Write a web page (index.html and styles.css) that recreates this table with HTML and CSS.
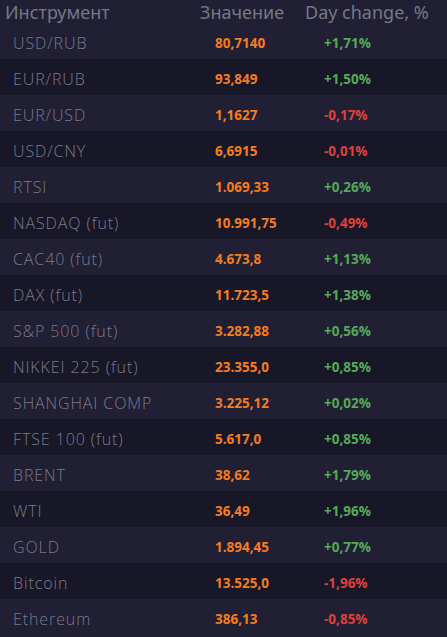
FILE: index.html
```html
<!DOCTYPE html>
<html lang="ru">
<head>
<meta charset="utf-8">
<link rel="stylesheet" href="styles.css">
</head>
<body>
<div class="table">
  <div class="head">
    <div class="h-name">Инструмент</div>
    <div class="h-val">Значение</div>
    <div class="h-chg">Day change, %</div>
  </div>
  <div class="row odd"><div class="name">USD/RUB</div><div class="val">80,7140</div><div class="chg up">+1,71%</div></div>
  <div class="row even"><div class="name">EUR/RUB</div><div class="val">93,849</div><div class="chg up">+1,50%</div></div>
  <div class="row odd"><div class="name">EUR/USD</div><div class="val">1,1627</div><div class="chg down">-0,17%</div></div>
  <div class="row even"><div class="name">USD/CNY</div><div class="val">6,6915</div><div class="chg down">-0,01%</div></div>
  <div class="row odd"><div class="name">RTSI</div><div class="val">1.069,33</div><div class="chg up">+0,26%</div></div>
  <div class="row even"><div class="name">NASDAQ (fut)</div><div class="val">10.991,75</div><div class="chg down">-0,49%</div></div>
  <div class="row odd"><div class="name">CAC40 (fut)</div><div class="val">4.673,8</div><div class="chg up">+1,13%</div></div>
  <div class="row even"><div class="name">DAX (fut)</div><div class="val">11.723,5</div><div class="chg up">+1,38%</div></div>
  <div class="row odd"><div class="name">S&amp;P 500 (fut)</div><div class="val">3.282,88</div><div class="chg up">+0,56%</div></div>
  <div class="row even"><div class="name">NIKKEI 225 (fut)</div><div class="val">23.355,0</div><div class="chg up">+0,85%</div></div>
  <div class="row odd"><div class="name">SHANGHAI COMP</div><div class="val">3.225,12</div><div class="chg up">+0,02%</div></div>
  <div class="row even"><div class="name">FTSE 100 (fut)</div><div class="val">5.617,0</div><div class="chg up">+0,85%</div></div>
  <div class="row odd"><div class="name">BRENT</div><div class="val">38,62</div><div class="chg up">+1,79%</div></div>
  <div class="row even"><div class="name">WTI</div><div class="val">36,49</div><div class="chg up">+1,96%</div></div>
  <div class="row odd"><div class="name">GOLD</div><div class="val">1.894,45</div><div class="chg up">+0,77%</div></div>
  <div class="row even"><div class="name">Bitcoin</div><div class="val">13.525,0</div><div class="chg down">-1,96%</div></div>
  <div class="row odd"><div class="name">Ethereum</div><div class="val">386,13</div><div class="chg down">-0,85%</div></div>
</div>
</body>
</html>
```

FILE: styles.css
```css
html, body {
  margin: 0;
  padding: 0;
  background: #201f33;
}
.table {
  display: flex;
  flex-direction: column;
  width: 447px;
}
.head {
  display: grid;
  grid-template-columns: 195px 105px 1fr;
  height: 23px;
  align-items: center;
  padding-left: 5px;
  font-family: "Noto Sans", sans-serif;
  font-size: 18px;
  color: #77778a;
  background: #201f33;
  white-space: nowrap;
}
.row {
  display: grid;
  grid-template-columns: 202px 109px 1fr;
  height: 36px;
  align-items: center;
  padding-left: 13px;
  padding-top: 4px;
  box-sizing: border-box;
}
.odd { background: #201f33; }
.even { background: #181727; }
.name {
  font-family: "Open Sans", sans-serif;
  font-weight: 300;
  font-size: 16px;
  color: #7c7b8d;
  letter-spacing: 0.9px;
  white-space: nowrap;
}
.val, .chg {
  font-family: "Open Sans", sans-serif;
  font-weight: 700;
  font-size: 13.5px;
}
.val { color: #f57c1f; }
.up { color: #55a958; }
.down { color: #e0403a; }
```
